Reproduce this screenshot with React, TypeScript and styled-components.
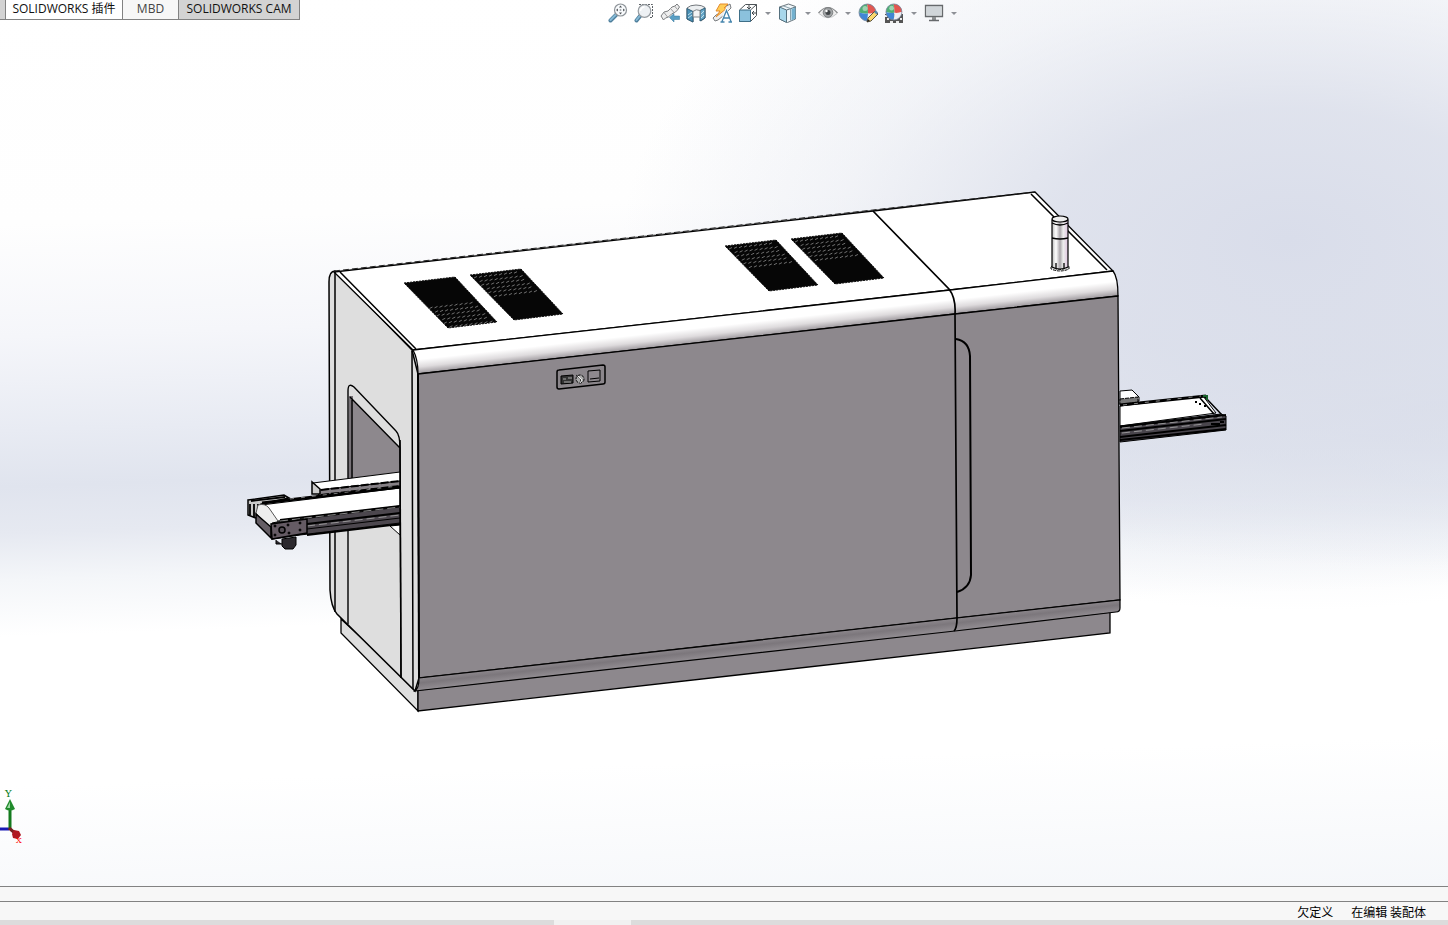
import React from "react";
import styled, { createGlobalStyle } from "styled-components";

const GlobalStyle = createGlobalStyle`
  * { box-sizing: border-box; }
  body { margin: 0; font-family: "Open Sans", "Noto Sans CJK SC", sans-serif; font-size: 12px; color: #111; }
  button { font: inherit; color: inherit; border: 0; padding: 0; background: none; }
`;

const Page = styled.div`
  display: flex;
  flex-direction: column;
  min-height: 100vh;
  background: #f7f7f7;
`;

const Workspace = styled.main`
  position: relative;
  flex: 1;
  display: flex;
  flex-direction: column;
  background:
    radial-gradient(ellipse 46% 42% at 89% 27%, #d9ddea 0%, rgba(218, 222, 234, 0.85) 35%, rgba(223, 227, 237, 0.4) 68%, rgba(255, 255, 255, 0) 100%),
    radial-gradient(ellipse 50% 18% at 100% 46%, rgba(216, 220, 233, 0.8) 0%, rgba(221, 225, 236, 0.5) 50%, rgba(255, 255, 255, 0) 100%),
    linear-gradient(178deg, #ffffff 0%, #fefefe 24%, #f5f6fa 36%, #e8ebf3 46%, #e0e4ee 52%, #e6e9f1 57%, #f4f6f9 62%, #ffffff 68%, #ffffff 84%, #f5f7fa 100%);
`;

const TopRow = styled.header`
  display: grid;
  grid-template-columns: 42% auto 1fr;
  align-items: start;
  height: 26px;
`;

const Tabs = styled.nav`
  display: flex;
  width: max-content;
  height: 20px;
  padding-left: 5px;
  background: #d3d3d3;
  border-bottom: 1px solid #828282;
`;

const Tab = styled.button<{ $tone: string; $width: number; $dim?: boolean }>`
  width: ${(p) => p.$width}px;
  height: 19px;
  padding-bottom: 2px;
  line-height: 16px;
  white-space: nowrap;
  border-left: 1px solid #828282;
  background: ${(p) => p.$tone};
  color: ${(p) => (p.$dim ? "#444" : "#111")};
  &:last-child { border-right: 1px solid #828282; }
`;

const Toolbar = styled.div`
  display: flex;
  gap: 6px;
  height: 26px;
  align-items: center;
`;

const Tool = styled.button`
  width: 20px;
  height: 20px;
  svg { display: block; }
`;

const Caret = styled.button`
  width: 8px;
  height: 20px;
  display: grid;
  place-items: center;
  &::before {
    content: "";
    border: 3px solid transparent;
    border-top-color: #8d9096;
    border-bottom: 0;
  }
`;

const Model = styled.svg`
  display: block;
  width: 100%;
  height: auto;
`;

const Triad = styled.svg`
  position: absolute;
  left: 0;
  bottom: 36px;
`;

const Prompt = styled.div`
  height: 15px;
  border-top: 1px solid #828282;
`;

const Status = styled.footer`
  display: flex;
  justify-content: flex-end;
  gap: 18px;
  height: 19px;
  padding-right: 22px;
  border-top: 1px solid #828282;
  line-height: 20px;
  color: #000;
  font-family: "Noto Sans CJK SC", sans-serif;
`;

const Strip = styled.div`
  display: grid;
  grid-template-columns: 554fr 77fr 817fr;
  height: 5px;
  background: #dcdcdc;
  &::before { content: ""; grid-column: 2; background: #f1f1f1; }
`;

const Icon = ({ children }: { children: React.ReactNode }) => (
  <svg width="20" height="20" viewBox="0 0 20 20" fill="none" aria-hidden="true">
    {children}
  </svg>
);

const FitIcon = () => (
  <Icon>
    <path d="M8 12 2.5 17.5" stroke="#4f7f9c" strokeWidth="4" strokeLinecap="round" />
    <path d="M8 11.5 2.5 17" stroke="#86bad6" strokeWidth="2" strokeLinecap="round" />
    <circle cx="12.5" cy="7" r="6" fill="#f8fafc" stroke="#8e9499" strokeWidth="1.2" />
    <path d="M12.500 2.500 14 4.400h-3zM12.500 11.500l1.500-1.900h-3zM8 7l1.900-1.500v3zM17 7l-1.900-1.500v3z" fill="#4e5357" />
    <path d="M11.500 7h2M12.500 6v2" stroke="#a4a9ae" />
  </Icon>
);
const AreaIcon = () => (
  <Icon>
    <path d="M5 1.500h13.500V14.500H15" stroke="#5c6166" strokeDasharray="2 1" />
    <path d="m6.5 12.5-4 5" stroke="#4f7f9c" strokeWidth="4" strokeLinecap="round" />
    <path d="m6.5 12-4 5" stroke="#86bad6" strokeWidth="2" strokeLinecap="round" />
    <circle cx="10.5" cy="8" r="6.3" fill="#eef1f4" stroke="#969ba0" strokeWidth="1.2" />
    <path d="M6.5 8a4 4 0 0 1 4-4" stroke="#fff" strokeWidth="1.5" />
  </Icon>
);
const PreviousIcon = () => (
  <Icon>
    <path d="m1 13 3-4 4-1 4-4 3-1 2-2 2.500 3-2 3-2 2-4 2-3 3-3 1-2 2z" fill="#eeeeee" stroke="#7c7e80" />
    <path d="m4 9.500 4 5M10 5l4.500 5M14.500 3l3 3.500" stroke="#9a9c9e" />
    <path d="M9.500 14.500 14 10.500v2.500h5.500v3.500H14V19z" fill="#5a9fc4" stroke="#35779b" strokeWidth=".5" />
  </Icon>
);
const SectionIcon = () => (
  <Icon>
    <path d="M1 5q3-3 9-3 6 0 9 2.500V15l-4 3V8.500q-4-2-8 0V19l-6-3z" fill="#eceff1" stroke="#73787d" />
    <path d="m1 5.500 6 3V19l-6-3z" fill="#4b92b8" stroke="#315f78" />
    <path d="m14 7.500 5-2.500v10l-5 3z" fill="#65a7c9" stroke="#315f78" />
    <path d="m2 12 4-3M2 15l4-3M15 11l3-3M15 15l3-3" stroke="#c1dfea" />
    <path d="M7 8.500q3-3 7-1V14H7z" fill="#f4f5f6" stroke="#85898c" />
  </Icon>
);
const AnnotationIcon = () => (
  <Icon>
    <path d="m1 15 3-3 4-2 5-6 5-3 1 4-8 8-5 4-3 1z" fill="#eceded" stroke="#7a7d80" />
    <path d="m8 1 8 0-4 4h3L4 14l4-6H4z" fill="#ffcd57" stroke="#e58b2c" />
    <path d="m10 18.500 4.500-11 4.500 11M11.500 15h6" stroke="#fff" strokeWidth="3" />
    <path d="m10 18.500 4.500-11 4.500 11M11.500 15h6M8.500 19h4M16.500 19H20" stroke="#4585ad" strokeWidth="1.300" />
  </Icon>
);
const OrientationIcon = () => (
  <Icon>
    <path d="m1.500 7 6-5.500H18.500v11l-6 6H1.500z" fill="#fff" stroke="#4e5458" />
    <path d="M12.500 7 18.500 1.500" stroke="#4e5458" />
    <path d="M1.500 7h11v11.500h-11z" fill="#8bc1dd" stroke="#3f6f88" />
    <path d="M11 2v4M9 4l2 2 2-2M18 10h-4M16 8l-2 2 2 2" stroke="#42484c" />
  </Icon>
);
const DisplayIcon = () => (
  <Icon>
    <path d="m1.500 4 9-3 7 2.500v12.500l-8 3.500-8-3.500z" fill="#f2f8fb" stroke="#6b767c" />
    <path d="m1.500 4 7 3v12.500l-7-3.500z" fill="#a8d7eb" stroke="#55707e" />
    <path d="m8.500 7 9-3" stroke="#55707e" />
    <path d="m13.500 6 4-1.500V15.500l-4 2z" fill="#73b0ce" />
    <path d="M5 2.800 12.500 5.500v12" stroke="#8aa0aa" />
  </Icon>
);
const EyeIcon = () => (
  <Icon>
    <path d="M0 10Q10-1 20 10 10 20 0 10z" fill="#eeeeee" />
    <path d="M.5 10Q10-1 19.500 10" stroke="#858789" strokeWidth="1.200" />
    <path d="M1 10.500Q10 19 19 10.500" stroke="#c2c4c6" />
    <circle cx="10" cy="9.500" r="4.800" fill="#a1a4a6" stroke="#7c7f81" />
    <circle cx="10" cy="9.500" r="2.500" fill="#424648" />
    <circle cx="8.500" cy="8" r="1.200" fill="#fff" />
  </Icon>
);
const Ball = () => (
  <>
    <path d="M10 10.500Q10 4 9 1A8.500 8.500 0 0 0 1 9.500q4 1.500 9 1z" fill="#4faf74" />
    <path d="M10 10.500Q10 4 9 1A8.500 8.500 0 0 1 18 9.500q-4 1.500-8 1z" fill="#e25750" />
    <path d="M10 10.500Q10 15 9 18A8.500 8.500 0 0 1 1 9.500q4 1.500 9 1z" fill="#4187d5" />
    <path d="M10 10.500Q10 15 9 18A8.500 8.500 0 0 0 18 9.500q-4 1.500-8 1z" fill="#eef0f4" />
    <circle cx="9.500" cy="9.500" r="8.500" stroke="#71819a" strokeWidth=".8" />
    <circle cx="7" cy="5.500" r="2.500" fill="#fff" opacity=".45" />
  </>
);
const AppearanceIcon = () => (
  <Icon>
    <Ball />
    <path d="m9 19 1-4 7-7 3 3-7 7z" fill="#fbd86d" stroke="#5d5541" />
    <path d="m16 9 2-1.500 2 2-1.500 2z" fill="#5b86ab" />
    <path d="m9 19 1-3 2 2z" fill="#222" />
  </Icon>
);
const SceneIcon = () => (
  <Icon>
    <path d="M1 11h18v9H1z" fill="#555" />
    <path d="M1 12h2v2H1zM3 15h2v2H3zM6 18h3v2H6zM12 18h3v2h-3zM16 15h2v2h-2zM14 12h2v2h-2z" fill="#ececec" />
    <g transform="translate(1)scale(.94)"><Ball /></g>
  </Icon>
);
const MonitorIcon = () => (
  <Icon>
    <path d="M1.500 2.500h17v11h-17z" fill="#e1e5e7" stroke="#66696c" strokeWidth="1.300" />
    <path d="M3 4h14v8H3z" fill="#d0d5d9" />
    <path d="M8 14h4v3H8z" fill="#8c8f91" />
    <path d="M5 17.500h10" stroke="#66696c" strokeWidth="1.500" />
  </Icon>
);

const tools: { label: string; icon: React.ReactNode; menu?: boolean }[] = [
  { label: "整屏显示全图", icon: <FitIcon /> },
  { label: "局部放大", icon: <AreaIcon /> },
  { label: "上一视图", icon: <PreviousIcon /> },
  { label: "剖面视图", icon: <SectionIcon /> },
  { label: "动态注解视图", icon: <AnnotationIcon /> },
  { label: "视图定向", icon: <OrientationIcon />, menu: true },
  { label: "显示样式", icon: <DisplayIcon />, menu: true },
  { label: "隐藏/显示项目", icon: <EyeIcon />, menu: true },
  { label: "编辑外观", icon: <AppearanceIcon /> },
  { label: "应用布景", icon: <SceneIcon />, menu: true },
  { label: "视图设置", icon: <MonitorIcon />, menu: true },
];

const vents = [
  { x: 404, y: 283, from: 0.5, to: 1 },
  { x: 470, y: 275, from: 0, to: 0.5 },
  { x: 725, y: 246, from: 0, to: 0.5 },
  { x: 791, y: 239, from: 0, to: 0.5 },
];

const rows = Array.from({ length: 12 }, (_, i) => i / 12);
const columns = Array.from({ length: 9 }, (_, i) => i);

const Vent = ({ x, y, from, to }: { x: number; y: number; from: number; to: number }) => (
  <g transform={`translate(${x} ${y})`}>
    <path d="M0 0 51-6 93 39 44 45z" fill="#060606" stroke="#111" strokeDasharray="2 1" />
    {rows
      .filter((t) => t >= from && t < to)
      .flatMap((t, r) =>
        columns.map((c) => (
          <path
            key={`${t}-${c}`}
            d={`M${4 + t * 43 + c * 5 + (r % 2) * 2} ${3 + t * 45 - c * 0.6}l3-1.500`}
            stroke="#8a8a8a"
            strokeWidth=".8"
          />
        ))
      )}
  </g>
);

const Machine = () => (
  <Model viewBox="0 26 1448 860" role="img" aria-label="装配体模型">
    <defs>
      <linearGradient id="bevel" gradientUnits="userSpaceOnUse" x1="680" y1="320" x2="682.8" y2="345">
        <stop offset="0" stopColor="#fff" />
        <stop offset=".4" stopColor="#fff" />
        <stop offset=".7" stopColor="#dedbdd" />
        <stop offset="1" stopColor="#969196" />
      </linearGradient>
      <linearGradient id="foot" gradientUnits="userSpaceOnUse" x1="680" y1="649" x2="681.34" y2="661">
        <stop offset="0" stopColor="#8c878c" />
        <stop offset=".4" stopColor="#7c777c" />
        <stop offset="1" stopColor="#928d92" />
      </linearGradient>
      <linearGradient id="beacon">
        <stop offset="0" stopColor="#bbb" />
        <stop offset=".25" stopColor="#fff" />
        <stop offset=".5" stopColor="#aaa5aa" />
        <stop offset=".7" stopColor="#eee" />
        <stop offset="1" stopColor="#dfc4df" />
      </linearGradient>
    </defs>

    {/* plinth */}
    <path d="M341 619v14l77 78v-21z" fill="#dedede" stroke="#000" strokeWidth="1.300" />
    <path d="M418 690v21l692-78v-21z" fill="#8d888d" stroke="#000" strokeWidth="1.300" />

    {/* cabinet faces */}
    <path d="M329 282Q329 271 335 271L412 350 418 374 419 678 415 691 337 614Q331 607 330 590z" fill="#dedede" stroke="#000" strokeWidth="1.500" />
    <path d="M334 272 873 211 1035 192 1113 271 950 290 413 350z" fill="#fff" stroke="#000" strokeWidth="1.300" />
    <path d="m334 271 539-61 162-18" stroke="#222" strokeDasharray="6 3" />
    <path d="M413 350 950 290 1113 271Q1118 277 1118 296L955 314 418 374Q418 359 413 350z" fill="url(#bevel)" stroke="#000" strokeWidth="1.300" />
    <path d="M418 374 955 314 1118 296 1120 600 957 618 419 678z" fill="#8d888d" stroke="#000" strokeWidth="1.300" />
    <path d="M419 678 957 618 1120 600v8q0 4-4 4L955 631 415 691q4-3 4-13z" fill="url(#foot)" stroke="#000" strokeWidth="1.200" />
    <g fill="none" stroke="#000" strokeWidth="1.500">
      <path d="M335 272v340M412 351l1 338M340 272l76 77M1031 194l76 76" />
      <path d="M873 211 949 289Q956 298 955 314L957 618Q957 628 954 631" strokeWidth="1.700" />
      <path d="M956 339Q969 341 970 356L971 575Q970 588 957 592" strokeWidth="2" />
      <path d="m418 374 1 304" strokeWidth="2" />
    </g>

    {vents.map((v) => <Vent key={v.x} {...v} />)}

    {/* operator panel */}
    <g stroke="#000">
      <path d="m559 370 44-5q2 0 2 2v15q0 2-2 2l-44 5q-2 0-2-2v-15q0-2 2-2z" fill="#8b868b" strokeWidth="1.500" />
      <path d="m561 376 12-1v8l-12 1z" fill="#333" />
      <path d="M563 379h3M568 378h4M564 382h7" stroke="#aaa" />
      <circle cx="580" cy="379" r="4" fill="#aaa" strokeDasharray="3 1" />
      <path d="m576 375 5 4-1 4" fill="none" stroke="#222" />
      <path d="m578 376 4 4-2 3" fill="none" stroke="#eee" />
      <path d="m588 371 12-1v11l-12 1zM590 379l9-1" fill="#8e898e" />
    </g>

    {/* signal tower */}
    <path d="M1051 266q9 7 18 0v3q-9 4-18 0z" fill="#ddd" stroke="#111" strokeDasharray="3 1" />
    <path d="M1052 220v47q8 4 16 0v-47z" fill="url(#beacon)" stroke="#000" strokeWidth="1.200" />
    <ellipse cx="1060" cy="219" rx="8" ry="3" fill="#eee" stroke="#000" strokeWidth="1.200" />
    <path d="M1052 223q8 4 16 0M1052 238q8 2 16 0M1056 268v-5M1064 268v-5" fill="none" stroke="#000" strokeWidth="1.300" />

    {/* entry opening */}
    <path d="m350 397 50 51v26l-48 6z" fill="#8d888d" />
    <path d="M349 396h4v84h-5z" fill="#777277" />
    <path d="M348 624V391q0-9 6-4l42 44q4 4 4 17l1 230M350 397l50 51M352 400v80" fill="none" stroke="#000" strokeWidth="1.400" />
    <path d="m390 526 10 9v-10z" fill="#fff" stroke="#000" />

    {/* infeed conveyor */}
    <g stroke="#000">
      <path d="m313 483 87-11v12l-76 10-11-4z" fill="#fff" />
      <path d="m319 490 81-9v7l-82 9z" fill="#858085" />
      <path d="m321 490 79-9M321 495l79-9" strokeWidth="2" strokeDasharray="8 2" />
      <path d="M312 482v12h8v-5z" fill="#ccc" strokeWidth="1.500" />
      <path d="m248 500 36-5 5 3-28 6v16l-13-5z" fill="#c8c8c8" strokeWidth="1.500" />
      <path d="m251 501 34-4M250 504v11M254 504v13M258 504v8" strokeWidth="1.800" />
      <path d="m261 505 139-17v18l-122 15-12-1z" fill="#fff" strokeWidth="1.200" />
      <path d="m262 503 138-16" strokeWidth="3" />
      <path d="m290 499 108-13" stroke="#aaa" strokeWidth=".7" strokeDasharray="4 7" />
      <path d="M258 505q7-2 11 3l9 13-8 8-14-16z" fill="#eee" stroke="#555" />
      <path d="m256 514 15 13v11l-15-15z" fill="#655e65" strokeWidth="1.500" />
      <path d="m277 522 123-15v16l-100 12-28 4v-16z" fill="#4c474e" />
      <path d="m280 520 120-14M307 524l93-11M307 535l93-11" strokeWidth="2" />
      <path d="m307 529 93-11" strokeWidth="1" />
      <path d="m280 521 120-14M307 526l93-11" stroke="#aaa" strokeWidth=".8" strokeDasharray="8 4" />
      <path d="M271 524 307 519v14l-35 6z" fill="#655b64" strokeWidth="1.500" />
      <circle cx="282" cy="530" r="3" fill="#554e55" strokeWidth="1.500" />
      {[[275, 526], [288, 525], [300, 523], [275, 535], [289, 533], [300, 530]].map(([cx, cy]) => (
        <circle key={`${cx}-${cy}`} cx={cx} cy={cy} r="1" fill="#111" />
      ))}
      <path d="M276 540v4h6M282 539l14-2v8l-3 4h-8l-3-3z" fill="#2c292e" />
    </g>
    <path d="m400 440 1 238" stroke="#000" strokeWidth="1.500" />

    {/* outfeed conveyor */}
    <g stroke="#000">
      <path d="m1120 391 12-1 7 7v4l-19 3z" fill="#fff" />
      <path d="m1120 399 18-2v5l-18 3z" fill="#777" strokeDasharray="4 1" />
      <path d="m1120 406 83-10 13 17-96 13z" fill="#fff" />
      <path d="m1120 405 86-9" strokeWidth="3" />
      <path d="m1123 405 78-9" stroke="#aaa" strokeWidth=".8" strokeDasharray="4 7" />
      <path d="m1200 398 14 16M1205 397l17 18" strokeWidth="1.500" />
      <path d="m1120 426 101-12 5 2v14l-106 12z" fill="#49454c" />
      <path d="m1120 427 106-12M1120 431l106-12M1120 437l106-12M1120 440l106-11" strokeWidth="2" />
      <path d="m1122 428 100-11M1122 433l82-9" stroke="#aaa" strokeWidth=".8" strokeDasharray="8 4" />
      <path d="M1203 396h4v4" stroke="#17602b" strokeWidth="2" />
      <path d="M1195 402h2M1199 404h2M1204 406h2M1211 424h9M1220 422h4" strokeWidth="2" />
    </g>
  </Model>
);

const AxisTriad = () => (
  <Triad width="30" height="64" viewBox="0 786 30 64" role="img" aria-label="坐标轴">
    <path d="M0 829h9" stroke="#1919b4" strokeWidth="3" />
    <path d="M10 829v-21" stroke="#147a1e" strokeWidth="3" />
    <path d="m10 799 5 10q-5 3-10 0z" fill="#208b2c" />
    <path d="m9 804 1-2v6H7z" fill="#a1d9a7" />
    <path d="m9 828 7 6" stroke="#762020" strokeWidth="3" />
    <path d="m12 834 2-4 5 1 2 4-3 4-5-1z" fill="#b01920" />
    <text x="5" y="797" fill="#087d18" fontSize="10" fontFamily="DejaVu Serif, serif">Y</text>
    <text x="16" y="843" fill="#f00" fontSize="8" fontFamily="DejaVu Serif, serif">X</text>
  </Triad>
);

export default function App() {
  return (
    <Page>
      <GlobalStyle />
      <Workspace>
        <TopRow>
          <Tabs>
            <Tab $tone="#fff" $width={117}>SOLIDWORKS 插件</Tab>
            <Tab $tone="#f7f7f7" $width={56} $dim>MBD</Tab>
            <Tab $tone="#d3d3d3" $width={122}>SOLIDWORKS CAM</Tab>
          </Tabs>
          <Toolbar>
            {tools.map((t) => (
              <React.Fragment key={t.label}>
                <Tool aria-label={t.label}>{t.icon}</Tool>
                {t.menu && <Caret aria-label={`${t.label}菜单`} />}
              </React.Fragment>
            ))}
          </Toolbar>
        </TopRow>
        <Machine />
        <AxisTriad />
      </Workspace>
      <Prompt />
      <Status>
        <span>欠定义</span>
        <span>在编辑 装配体</span>
      </Status>
      <Strip />
    </Page>
  );
}
